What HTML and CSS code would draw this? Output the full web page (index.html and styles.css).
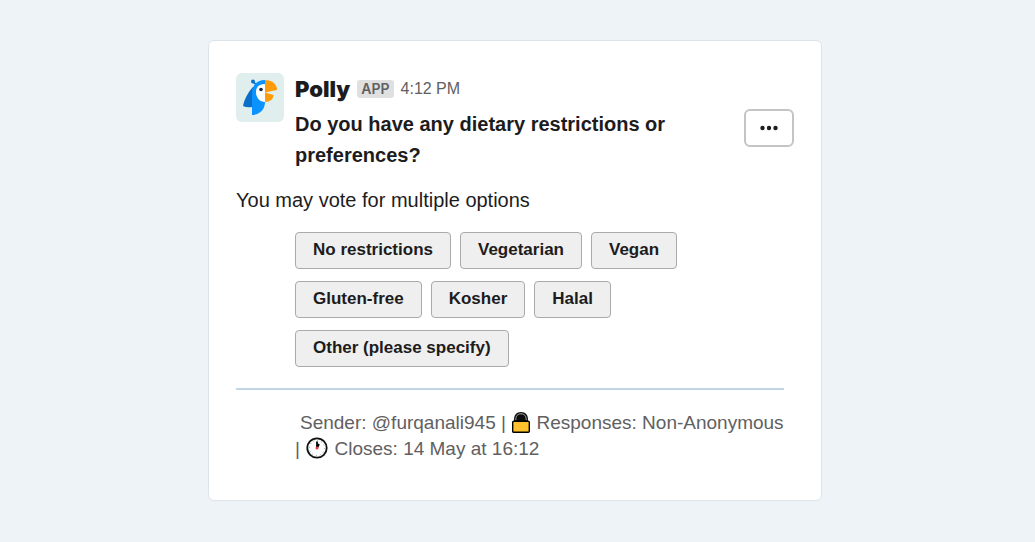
FILE: index.html
```html
<!DOCTYPE html>
<html lang="en">

<head>
  <meta charset="UTF-8" />
  <meta name="viewport" content="width=device-width, initial-scale=1.0" />
  <title>Polly</title>
  <link rel="stylesheet" href="styles.css">
</head>

<body>
  <main class="card">
    <div class="message">
      <svg class="avatar" viewBox="0 0 48 49" aria-hidden="true">
        <rect width="48" height="49" rx="6" fill="#e0efed" />
        <path d="M17 14C12 19 8 27 7 33Q11 35 16 34L21 18Z" fill="#0b6fc9" />
        <path d="M17 9L21 12" stroke="#0b6fc9" stroke-width="1.6" />
        <circle cx="17" cy="8.5" r="2" fill="#0b6fc9" />
        <path d="M29 7C21 7 16 12 16 20V42C24 42 29 36 29 29Z" fill="#0a93ff" />
        <path d="M29 11C22 11 20 15 20 19C20 25 24 29 29 29Z" fill="#fff" />
        <circle cx="25" cy="16.5" r="1.8" fill="#14224d" />
        <path d="M29 7C36 7 41 11 41 17L29 19.5Z" fill="#ff9b0b" />
        <path d="M29 19.5L37.5 22C37.5 26 34 29 29 29Z" fill="#ff9b0b" />
      </svg>
      <div class="message-body">
        <div class="message-header">
          <span class="sender-name">Polly</span>
          <span class="app-badge">APP</span>
          <time class="time">4:12 PM</time>
        </div>
        <h1 class="question">Do you have any dietary restrictions or preferences?</h1>
      </div>
      <button class="more-button" type="button" aria-label="More actions">
        <svg class="more-icon" viewBox="0 0 20 6" aria-hidden="true">
          <circle cx="3.5" cy="3" r="2.2" />
          <circle cx="10" cy="3" r="2.2" />
          <circle cx="16.5" cy="3" r="2.2" />
        </svg>
      </button>
    </div>

    <p class="hint">You may vote for multiple options</p>

    <div class="options">
      <button class="option" type="button">No restrictions</button>
      <button class="option" type="button">Vegetarian</button>
      <button class="option" type="button">Vegan</button>
      <button class="option" type="button">Gluten-free</button>
      <button class="option" type="button">Kosher</button>
      <button class="option" type="button">Halal</button>
      <button class="option" type="button">Other (please specify)</button>
    </div>

    <hr class="divider">

    <p class="details">
      <span>Sender: @furqanali945</span>
      <span>|</span>
      <svg class="icon lock" viewBox="0 0 18 22" aria-hidden="true">
        <path d="M2 11V8.5C2 4 4.5 1 9 1S16 4 16 8.5V11Z" fill="#0c0c0c" />
        <path d="M3.8 9C3.8 5 5.5 2.8 9 2.8S14.2 5 14.2 9" fill="none" stroke="#a9adb0" stroke-width="1" />
        <rect x="0.7" y="10.2" width="16.6" height="11" rx="1" fill="#ffc02e" stroke="#000" stroke-width="1.4" />
      </svg>
      <span>Responses: Non-Anonymous</span>
      <span>|</span>
      <svg class="icon clock" viewBox="0 0 22 22" aria-hidden="true">
        <circle cx="11" cy="11" r="9.7" fill="#fff" stroke="#111" stroke-width="1.8" />
        <circle cx="11" cy="11" r="7.5" fill="none" stroke="#999" stroke-width="1" stroke-dasharray="1 2.93" />
        <path d="M11 11V4.5M11 11L13 7" stroke="#000" stroke-width="1.8" />
        <circle cx="11" cy="11" r="1.5" fill="#f03a3a" />
      </svg>
      <span>Closes: 14 May at 16:12</span>
    </p>
  </main>
</body>

</html>
```
FILE: styles.css
```css
* {
  box-sizing: border-box;
  margin: 0;
  padding: 0;
}

body {
  padding: 40px 5px 40px 0;
  background-color: #edf3f7;
  color: #1d1c1d;
  font-family: "Liberation Sans", Arial, sans-serif;
}

.card {
  width: 100%;
  max-width: 614px;
  margin: 0 auto;
  padding: 32px 27px 38px;
  background-color: #fff;
  border: 1px solid #dde4e9;
  border-radius: 6px;
}

.message {
  display: flex;
  align-items: flex-start;
}

.avatar {
  flex: none;
  width: 48px;
  height: 49px;
  margin-right: 11px;
}

.message-body {
  flex: 1;
}

.message-header {
  display: flex;
  align-items: center;
  gap: 7px;
  height: 31px;
}

.sender-name {
  font-family: Inter, sans-serif;
  font-size: 22px;
  font-weight: 900;
}

.app-badge {
  padding: 0 4px;
  border-radius: 3px;
  background-color: #e0e0e0;
  color: #616061;
  font-family: Inter, sans-serif;
  font-size: 14px;
  font-weight: 600;
  line-height: 18px;
}

.time {
  color: #616061;
  font-size: 16px;
}

.question {
  max-width: 400px;
  margin-top: 5px;
  font-size: 20px;
  font-weight: bold;
  line-height: 31px;
}

.more-button {
  width: 50px;
  height: 38px;
  margin-top: 36px;
  background-color: #fff;
  border: 2px solid #c4c4c4;
  border-radius: 6px;
}

.more-icon {
  display: block;
  width: 20px;
  height: 6px;
  margin: 0 auto;
  fill: #1d1c1d;
}

.hint {
  margin-top: 14px;
  font-size: 20px;
  line-height: 31px;
}

.options {
  display: flex;
  flex-wrap: wrap;
  gap: 12px 9px;
  max-width: 480px;
  margin-top: 16px;
  padding-left: 59px;
}

.option {
  height: 37px;
  padding: 0 17px 1px;
  background-color: #efefef;
  border: 1px solid #aaa;
  border-radius: 4px;
  color: #1d1c1d;
  font-family: inherit;
  font-size: 17px;
  font-weight: bold;
}

.divider {
  margin: 21px 10px 20px 0;
  border: none;
  border-top: 2px solid #c2d7e5;
}

.details {
  padding: 0 8px 0 59px;
  color: #616061;
  font-size: 19px;
  line-height: 26px;
  text-indent: 5px;
}

.icon {
  height: 22px;
  margin: 0 1px;
  vertical-align: -4px;
}

.lock {
  width: 18px;
}

.clock {
  width: 22px;
}
```
